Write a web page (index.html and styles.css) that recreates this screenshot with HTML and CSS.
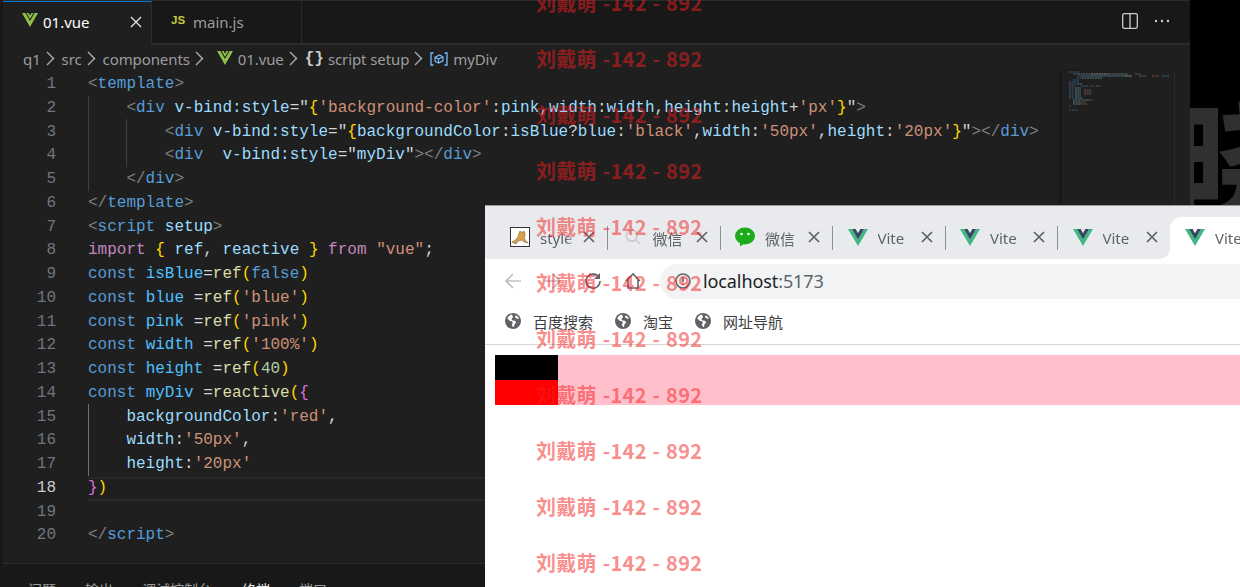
FILE: index.html
```html
<!DOCTYPE html>
<html lang="zh">
<head>
<meta charset="utf-8">
<title>01.vue</title>
<link rel="stylesheet" href="styles.css">
</head>
<body>
<svg class="defs" width="0" height="0" aria-hidden="true">
  <symbol id="seti-vue" viewBox="0 0 16 14"><path fill="#8dc149" d="M0 0h3.4L8 8 12.600 0H16L8 14z"/><path fill="#8dc149" d="M4.600 0h2L8 2.600 9.400 0h2L8 6z"/></symbol>
  <symbol id="vite-vue" viewBox="0 0 20 17"><path fill="#41b883" d="M0 0h4l6 10.400L16 0h4L10 17z"/><path fill="#35495e" d="M4 0h3.600L10 4.200 12.400 0H16l-6 10.400z"/></symbol>
  <symbol id="close" viewBox="0 0 12 12"><path d="M1 1l10 10M11 1L1 11" fill="none" stroke="#5f6368" stroke-width="1.700"/></symbol>
  <symbol id="globe" viewBox="0 0 16 16"><circle cx="8" cy="8" r="8" fill="#5f6368"/><path fill="#fff" d="M7 1.600C5 2 3 3.500 2.300 5.600l2.700 2.400 2 .2.800 1.500-1 2 1.200 2.200 1-.2.500-2.400 1.800-2-1.600-1.600-2.600-.4-.6-1.300L8 4.200zM10.500 2.400 9.800 4l1.800 1.600 2.600.2c-.6-1.500-2-2.800-3.700-3.400z"/></symbol>
</svg>
<div class="desktop">
  <div class="bg-glyph">晓</div>

  <div class="vscode">
    <div class="tabbar">
      <div class="etab active">
        <svg class="ico-vue"><use href="#seti-vue"/></svg>
        <span class="etab-name">01.vue</span>
        <svg class="etab-close" viewBox="0 0 12 12"><path d="M1 1l10 10M11 1L1 11" fill="none" stroke="#e8e8e8" stroke-width="1.300"/></svg>
      </div>
      <div class="etab">
        <span class="ico-js">JS</span>
        <span class="etab-name dim">main.js</span>
      </div>
      <div class="tabbar-actions">
        <svg class="split" viewBox="0 0 16 16"><rect x=".7" y=".7" width="14.600" height="14.600" rx="1.500" fill="none" stroke="#ccc" stroke-width="1.300"/><path d="M8 1v14" stroke="#ccc" stroke-width="1.300"/></svg>
        <svg class="dots" viewBox="0 0 16 4"><circle cx="2" cy="2" r="1.200" fill="#ccc"/><circle cx="8" cy="2" r="1.200" fill="#ccc"/><circle cx="14" cy="2" r="1.200" fill="#ccc"/></svg>
      </div>
    </div>

    <div class="crumbs">
      <span>q1</span><i class="chev"></i>
      <span>src</span><i class="chev"></i>
      <span>components</span><i class="chev"></i>
      <svg class="ico-vue crumb-vue"><use href="#seti-vue"/></svg><span>01.vue</span><i class="chev"></i>
      <span class="crumb-brace">{}</span><span>script setup</span><i class="chev"></i>
      <svg class="crumb-var" viewBox="0 0 18 14"><path d="M3.500 1H1v12h2.500M14.500 1H17v12h-2.500" fill="none" stroke="#75beff" stroke-width="1.300"/><path d="M5 5.200 9.500 3 13 4.800v4L8.500 11 5 9.200zM5 5.200l3.500 1.800L13 4.800M8.500 7v4" fill="none" stroke="#75beff" stroke-width="1.200"/></svg><span>myDiv</span>
    </div>

    <div class="editor">
      <div class="gutter">
        <div>1</div><div>2</div><div>3</div><div>4</div><div>5</div><div>6</div><div>7</div><div>8</div><div>9</div><div>10</div>
        <div>11</div><div>12</div><div>13</div><div>14</div><div>15</div><div>16</div><div>17</div><div class="cur">18</div><div>19</div><div>20</div>
      </div>
      <div class="code">
        <i class="guide g1"></i><i class="guide g2"></i><i class="guide g3"></i>
        <div class="ln"><b class="p">&lt;</b><b class="t">template</b><b class="p">&gt;</b></div>
        <div class="ln">    <b class="p">&lt;</b><b class="t">div</b> <b class="a">v-bind:style</b><b class="w">="</b><b class="y">{</b><b class="s">'background-color'</b><b class="w">:</b><b class="a">pink</b><b class="w">,</b><b class="a">width</b><b class="w">:</b><b class="a">width</b><b class="w">,</b><b class="a">height</b><b class="w">:</b><b class="a">height</b><b class="w">+</b><b class="s">'px'</b><b class="y">}</b><b class="w">"</b><b class="p">&gt;</b></div>
        <div class="ln">        <b class="p">&lt;</b><b class="t">div</b> <b class="a">v-bind:style</b><b class="w">="</b><b class="y">{</b><b class="a">backgroundColor</b><b class="w">:</b><b class="a">isBlue</b><b class="w">?</b><b class="a">blue</b><b class="w">:</b><b class="s">'black'</b><b class="w">,</b><b class="a">width</b><b class="w">:</b><b class="s">'50px'</b><b class="w">,</b><b class="a">height</b><b class="w">:</b><b class="s">'20px'</b><b class="y">}</b><b class="w">"</b><b class="p">&gt;&lt;/</b><b class="t">div</b><b class="p">&gt;</b></div>
        <div class="ln">        <b class="p">&lt;</b><b class="t">div</b>  <b class="a">v-bind:style</b><b class="w">="</b><b class="a">myDiv</b><b class="w">"</b><b class="p">&gt;&lt;/</b><b class="t">div</b><b class="p">&gt;</b></div>
        <div class="ln">    <b class="p">&lt;/</b><b class="t">div</b><b class="p">&gt;</b></div>
        <div class="ln"><b class="p">&lt;/</b><b class="t">template</b><b class="p">&gt;</b></div>
        <div class="ln"><b class="p">&lt;</b><b class="t">script</b> <b class="a">setup</b><b class="p">&gt;</b></div>
        <div class="ln"><b class="k">import</b> <b class="y">{</b> <b class="a">ref</b><b class="w">,</b> <b class="a">reactive</b> <b class="y">}</b> <b class="k">from</b> <b class="s">"vue"</b><b class="w">;</b></div>
        <div class="ln"><b class="t">const</b> <b class="c">isBlue</b><b class="w">=</b><b class="f">ref</b><b class="y">(</b><b class="t">false</b><b class="y">)</b></div>
        <div class="ln"><b class="t">const</b> <b class="c">blue</b> <b class="w">=</b><b class="f">ref</b><b class="y">(</b><b class="s">'blue'</b><b class="y">)</b></div>
        <div class="ln"><b class="t">const</b> <b class="c">pink</b> <b class="w">=</b><b class="f">ref</b><b class="y">(</b><b class="s">'pink'</b><b class="y">)</b></div>
        <div class="ln"><b class="t">const</b> <b class="c">width</b> <b class="w">=</b><b class="f">ref</b><b class="y">(</b><b class="s">'100%'</b><b class="y">)</b></div>
        <div class="ln"><b class="t">const</b> <b class="c">height</b> <b class="w">=</b><b class="f">ref</b><b class="y">(</b><b class="n">40</b><b class="y">)</b></div>
        <div class="ln"><b class="t">const</b> <b class="c">myDiv</b> <b class="w">=</b><b class="f">reactive</b><b class="y">(</b><b class="m">{</b></div>
        <div class="ln">    <b class="a">backgroundColor</b><b class="w">:</b><b class="s">'red'</b><b class="w">,</b></div>
        <div class="ln">    <b class="a">width</b><b class="w">:</b><b class="s">'50px'</b><b class="w">,</b></div>
        <div class="ln">    <b class="a">height</b><b class="w">:</b><b class="s">'20px'</b></div>
        <div class="ln cursor"><b class="m">}</b><b class="y">)</b></div>
        <div class="ln"></div>
        <div class="ln"><b class="p">&lt;/</b><b class="t">script</b><b class="p">&gt;</b></div>
      </div>
      <div class="minimap">
        <svg class="mini" width="110" height="44" viewBox="0 0 110 44">
          <path stroke="#3f6f97" d="M0 1h10M4 3h5M8 5h5M8 7h5M4 9h6M0 11h10M0 13h7M0 17h5M0 19h5M0 21h5M0 23h5M0 25h5M0 27h5M0 39h9"/>
          <path stroke="#6f9cb0" d="M9 3h50M13 5h50M13 7h20M6 17h6M6 19h6M6 21h6M6 23h6M6 25h6M6 27h8M4 29h15M4 31h6M4 33h7M8 13h5"/>
          <path stroke="#8c6a58" d="M22 3h18M66 3h6M56 5h7M70 5h7M83 5h7M15 19h7M15 21h7M15 23h7M19 29h5M10 31h7M11 33h7M27 15h5"/>
          <path stroke="#7d5a7a" d="M0 15h6M21 15h4M0 35h2"/>
          <path stroke="#4d7d9e" d="M93 5h7M12 15h8"/>
        </svg>
      </div>
      <div class="scroll-col"></div>
    </div>

    <div class="panel">
      <span>问题</span><span>输出</span><span>调试控制台</span><span class="on">终端</span><span>端口</span>
    </div>
  </div>

  <div class="browser">
    <div class="tabstrip">
      <div class="ctab">
        <svg class="cico" viewBox="0 0 20 20"><rect x=".5" y=".5" width="19" height="19" fill="#fff" stroke="#333"/><path fill="#d6a24a" stroke="#6b5326" stroke-width=".5" d="M2 15c3-1 4-3 6-5l1-4 1-2 1 1h2l1-1 1 2 0 3-1 2 2 3 2 2-4-1-2-2-4 1-2 3z"/></svg>
        <span class="ctitle">style</span>
        <svg class="cclose"><use href="#close"/></svg>
      </div>
      <div class="ctab">
        <svg class="cico small" viewBox="0 0 16 16"><circle cx="6.800" cy="6.800" r="5.500" fill="none" stroke="#c8cacc" stroke-width="1.600"/><path d="M11 11l4 4" stroke="#c8cacc" stroke-width="1.600"/></svg>
        <span class="ctitle">微信</span>
        <svg class="cclose"><use href="#close"/></svg>
      </div>
      <div class="ctab">
        <svg class="cico" viewBox="0 0 20 20"><ellipse cx="10" cy="9" rx="10" ry="8.500" fill="#1aad19"/><path d="M5 15l0 4.500 5-3.500z" fill="#1aad19"/><circle cx="6.500" cy="7" r="1.300" fill="#fff"/><circle cx="13.500" cy="7" r="1.300" fill="#fff"/></svg>
        <span class="ctitle">微信</span>
        <svg class="cclose"><use href="#close"/></svg>
      </div>
      <div class="ctab">
        <svg class="cico vue"><use href="#vite-vue"/></svg>
        <span class="ctitle">Vite</span>
        <svg class="cclose"><use href="#close"/></svg>
      </div>
      <div class="ctab">
        <svg class="cico vue"><use href="#vite-vue"/></svg>
        <span class="ctitle">Vite</span>
        <svg class="cclose"><use href="#close"/></svg>
      </div>
      <div class="ctab last">
        <svg class="cico vue"><use href="#vite-vue"/></svg>
        <span class="ctitle">Vite</span>
        <svg class="cclose"><use href="#close"/></svg>
      </div>
      <div class="ctab current">
        <svg class="cico vue"><use href="#vite-vue"/></svg>
        <span class="ctitle">Vite</span>
      </div>
    </div>

    <div class="toolbar">
      <svg class="navico first" viewBox="0 0 16 16"><path d="M16 8H1.500M8 1 1 8l7 7" fill="none" stroke="#bdc1c6" stroke-width="1.600"/></svg>
      <svg class="navico" viewBox="0 0 16 16"><path d="M0 8h14.500M8 1l7 7-7 7" fill="none" stroke="#bdc1c6" stroke-width="1.600"/></svg>
      <svg class="navico" viewBox="0 0 16 16"><path d="M14 4.500A7 7 0 1 0 15 8" fill="none" stroke="#5f6368" stroke-width="1.600"/><path d="M15 0v6H9z" fill="#5f6368"/></svg>
      <svg class="navico" viewBox="0 0 16 16"><path d="M1 8l7-7 7 7M3 6.500V15h10V6.500" fill="none" stroke="#5f6368" stroke-width="1.600"/></svg>
      <div class="omni">
        <svg class="info" viewBox="0 0 16 16"><circle cx="8" cy="8" r="7" fill="none" stroke="#5f6368" stroke-width="1.600"/><path d="M8 4v5M8 10.500v1.800" stroke="#5f6368" stroke-width="1.600"/></svg>
        <span class="url">localhost<span class="port">:5173</span></span>
      </div>
    </div>

    <div class="bookmarks">
      <svg class="bm-ico"><use href="#globe"/></svg><span class="bm">百度搜索</span>
      <svg class="bm-ico"><use href="#globe"/></svg><span class="bm">淘宝</span>
      <svg class="bm-ico"><use href="#globe"/></svg><span class="bm">网址导航</span>
    </div>

    <div class="viewport">
      <div class="pink">
        <div class="black"></div>
        <div class="red"></div>
      </div>
    </div>
  </div>

  <div class="watermark">
    <span>刘戴萌 -142 - 892</span><span>刘戴萌 -142 - 892</span><span>刘戴萌 -142 - 892</span><span>刘戴萌 -142 - 892</span><span>刘戴萌 -142 - 892</span><span>刘戴萌 -142 - 892</span><span>刘戴萌 -142 - 892</span><span>刘戴萌 -142 - 892</span><span>刘戴萌 -142 - 892</span><span>刘戴萌 -142 - 892</span><span>刘戴萌 -142 - 892</span>
  </div>
</div>
</body>
</html>
```
FILE: styles.css
```css
* { box-sizing: border-box; }
html, body { margin: 0; padding: 0; background: #000; overflow: hidden; }
.defs { position: absolute; }
.desktop {
  position: relative;
  width: 1240px;
  height: 587px;
  overflow: hidden;
  background: #000;
  font-family: "Noto Sans", "Noto Sans CJK SC", sans-serif;
}
.bg-glyph {
  position: absolute;
  left: 1172px;
  top: 78px;
  font: 900 130px/150px "Noto Sans CJK SC", sans-serif;
  color: #303030;
}

/* VS Code window */
.vscode {
  position: relative;
  width: 1190px;
  height: 587px;
  display: flex;
  flex-direction: column;
  background: #1f1f1f;
  border-left: 3px solid #181818;
}
.tabbar {
  height: 45px;
  flex: none;
  display: flex;
  background: #181818;
  border-top: 1px solid #2b2b2b;
  border-bottom: 2px solid #2b2b2b;
}
.etab {
  width: 150px;
  height: 42px;
  display: flex;
  align-items: center;
  padding-left: 19px;
  border-right: 1px solid #2b2b2b;
  color: #9d9d9d;
  font-size: 15px;
}
.etab.active {
  width: 149px;
  height: 44px;
  background: #1f1f1f;
  border-top: 1px solid #0078d4;
  color: #fff;
  padding-bottom: 3px;
}
.ico-vue { width: 16px; height: 14px; flex: none; margin-top: -4px; }
.etab-name { margin-left: 5px; }
.etab-name.dim { margin-left: 6px; }
.etab-close { width: 12px; height: 12px; margin-left: 40px; }
.ico-js {
  width: 16px;
  margin-top: -4px;
  color: #cbcb41;
  font: 700 11.500px "Liberation Sans", sans-serif;
}
.tabbar-actions {
  margin-left: auto;
  width: 70px;
  display: flex;
  align-items: center;
  gap: 16px;
  padding: 0 0 2px 2px;
}
.split { width: 16px; height: 16px; }
.dots { width: 16px; height: 4px; }

.crumbs {
  height: 26px;
  flex: none;
  display: flex;
  align-items: center;
  padding: 1px 0 0 20px;
  color: #9d9d9d;
  font-size: 15px;
  letter-spacing: -.1px;
}
.chev {
  width: 7px;
  height: 7px;
  margin: 0 11px 0 3px;
  border-top: 1px solid #a8a8a8;
  border-right: 1px solid #a8a8a8;
  transform: rotate(45deg) scale(1.400);
}
.crumb-vue { margin: -2px 5px 0 6px; }
.crumb-brace { color: #ccc; font: 700 16px "Liberation Mono", monospace; margin-right: 4px; letter-spacing: 0; }
.crumb-var { width: 18px; height: 14px; margin-right: 5px; }

.editor { flex: 1; display: flex; min-height: 0; }
.gutter {
  width: 85px;
  flex: none;
  padding: 2px 32px 0 0;
  text-align: right;
  color: #6e7681;
  font: 16px/23.750px "Liberation Mono", monospace;
}
.gutter .cur { color: #ccc; }
.code {
  position: relative;
  flex: 1;
  min-width: 0;
  padding-top: 2px;
  font: 16px/23.750px "Liberation Mono", monospace;
  color: #d4d4d4;
}
.code b { font-weight: 400; }
.ln { height: 23.750px; white-space: pre; }
.cursor {
  border-top: 2px solid #282828;
  border-bottom: 2px solid #282828;
  line-height: 19.750px;
}
.guide { position: absolute; width: 1px; background: #404040; }
.g1 { left: 0; top: 25px; height: 95px; }
.g2 { left: 38px; top: 48px; height: 48px; }
.g3 { left: 0; top: 333px; height: 72px; background: #707070; }
.p { color: #808080; }
.t { color: #569cd6; }
.a { color: #9cdcfe; }
.s { color: #ce9178; }
.w { color: #d4d4d4; }
.y { color: #ffd700; }
.m { color: #da70d6; }
.k { color: #c586c0; }
.c { color: #4fc1ff; }
.f { color: #dcdcaa; }
.n { color: #b5cea8; }

.minimap {
  width: 112px;
  flex: none;
  padding-left: 7px;
  box-shadow: -3px 0 4px -2px #111;
  background: #1f1f1f;
}
.mini { display: block; }
.mini path { stroke-width: 1; stroke-dasharray: 2 .6; opacity: .7; }
.scroll-col { width: 16px; flex: none; border-left: 1px solid #2b2b2b; }
.panel {
  height: 24px;
  flex: none;
  display: flex;
  gap: 29px;
  padding: 16px 0 0 25px;
  background: #181818;
  border-top: 1px solid #2b2b2b;
  color: #9d9d9d;
  font-size: 14px;
  line-height: 20px;
  overflow: hidden;
}
.panel span:nth-child(4) { margin-left: 1px; }
.panel .on { color: #e7e7e7; }

/* Browser window */
.browser {
  position: absolute;
  left: 485px;
  top: 205px;
  right: 0;
  bottom: 0;
  background: #fff;
  display: flex;
  flex-direction: column;
  overflow: hidden;
  border-top: 1px solid #9a9a9a;
}
.tabstrip {
  height: 53px;
  flex: none;
  display: flex;
  padding: 11px 0 0 10px;
  background: #e8eaed;
}
.ctab {
  position: relative;
  width: 112.500px;
  flex: none;
  height: 42px;
  display: flex;
  align-items: center;
  padding: 0 0 0 15px;
  color: #5f6368;
  font-size: 15px;
}
.ctab::after {
  content: "";
  position: absolute;
  right: -.5px;
  top: 9px;
  width: 1px;
  height: 24px;
  background: #8e9196;
}
.ctab.last::after, .ctab.current::after { display: none; }
.ctab.current {
  background: #fff;
  border-radius: 12px 0 0 0;
  width: 200px;
}
.ctab.current::before {
  content: "";
  position: absolute;
  left: -10px;
  bottom: 0;
  width: 10px;
  height: 10px;
  background: radial-gradient(circle at 0 0, #e8eaed 9.500px, #fff 10px);
}
.cico { width: 20px; height: 20px; flex: none; margin-top: -2px; }
.cico.small { width: 16px; height: 16px; margin: -2px 2px 0 2px; }
.cico.vue { width: 20px; height: 17px; margin-top: -2px; }
.ctitle {
  width: 36px;
  margin-left: 10px;
  overflow: hidden;
  white-space: nowrap;
  -webkit-mask-image: linear-gradient(90deg, #000 75%, transparent);
  mask-image: linear-gradient(90deg, #000 75%, transparent);
}
.cclose { width: 12px; height: 12px; flex: none; margin: -3px 0 0 7px; }
.toolbar {
  height: 49px;
  flex: none;
  display: flex;
  align-items: center;
  padding: 0 0 5px 20px;
}
.navico { width: 16px; height: 16px; flex: none; margin-right: 24px; }
.omni {
  flex: 1;
  height: 35px;
  margin-left: -5px;
  display: flex;
  align-items: center;
  padding-left: 15px;
  background: #f1f3f4;
  border-radius: 18px 0 0 18px;
}
.info { width: 16px; height: 16px; flex: none; }
.url { margin-left: 12px; font-size: 18px; color: #202124; letter-spacing: -.1px; }
.port { color: #5f6368; }
.bookmarks {
  height: 37px;
  flex: none;
  display: flex;
  align-items: center;
  padding: 0 0 10px 20px;
  border-bottom: 1px solid #d6d6d6;
  color: #3c4043;
  font-size: 15px;
}
.bm-ico { width: 16px; height: 16px; flex: none; margin-right: 12px; }
.bm { margin-right: 22px; }
.viewport { flex: 1; padding: 10px 0 0 10px; }
.pink { height: 50px; background: #ffc0cb; }
.black { width: 63px; height: 25px; background: #000; }
.red { width: 63px; height: 25px; background: #f00; }

/* Watermark on top of everything */
.watermark {
  position: absolute;
  left: 536px;
  top: -11px;
  display: flex;
  flex-direction: column;
  gap: 28px;
  pointer-events: none;
  color: rgba(243, 30, 32, .52);
  font: 700 20px/28px "Noto Sans CJK SC", sans-serif;
  letter-spacing: .3px;
  word-spacing: 1px;
  white-space: pre;
}
```
